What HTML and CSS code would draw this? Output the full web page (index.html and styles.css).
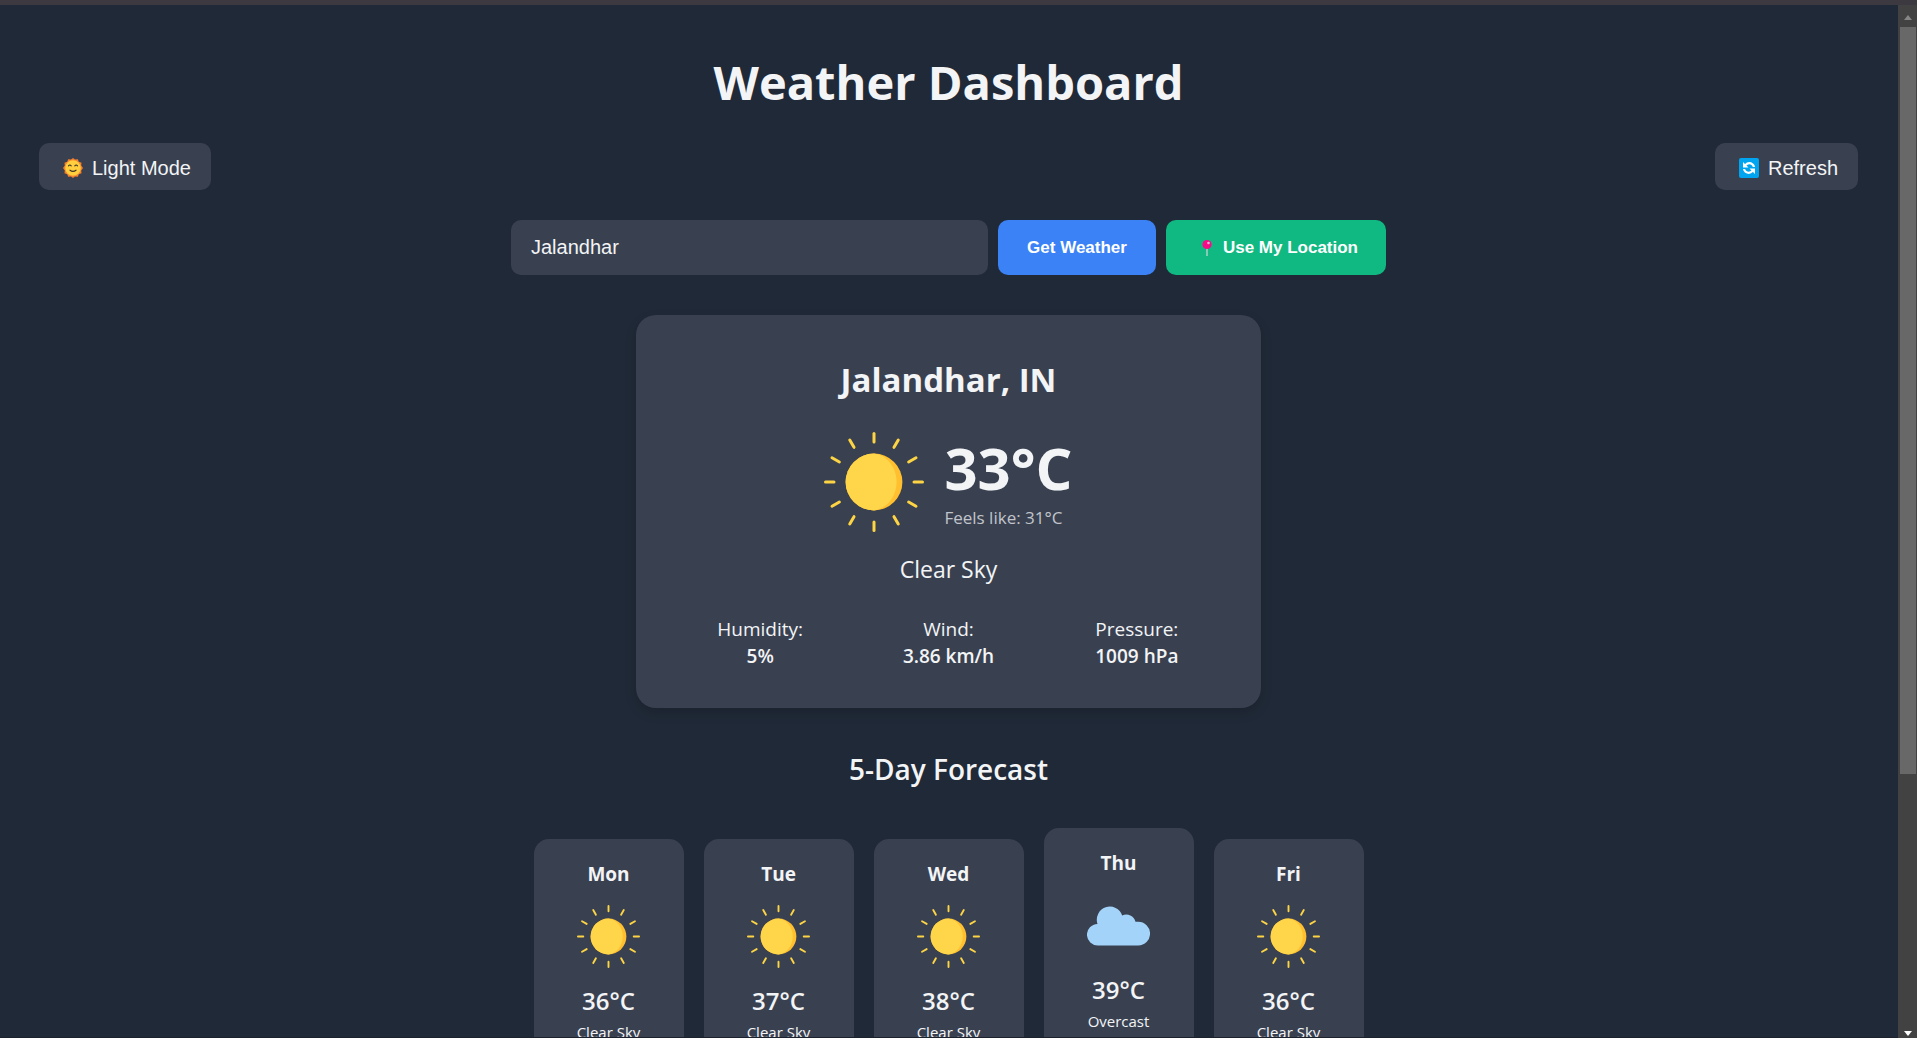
FILE: index.html
```html
<!DOCTYPE html>
<html lang="en">
<head>
<meta charset="utf-8">
<meta name="viewport" content="width=device-width, initial-scale=1">
<title>Weather Dashboard</title>
<link rel="stylesheet" href="styles.css">
</head>
<body>
<svg class="defs" aria-hidden="true">
  <symbol id="sun" viewBox="0 0 100 100">
    <circle cx="50" cy="50" r="28.400" fill="#ffbf2e"/>
    <path d="M50 21.600a28.400 28.400 0 1 0 0 56.800c13-1.500 22.600-14.300 22.600-28.400S63 23.100 50 21.600z" fill="#ffd54a"/>
    <g stroke="#fdd443" stroke-width="3" stroke-linecap="round">
      <path id="ray" d="M50 1.500v8.500"/>
      <use href="#ray" transform="rotate(30 50 50)"/>
      <use href="#ray" transform="rotate(60 50 50)"/>
      <use href="#ray" transform="rotate(90 50 50)"/>
      <use href="#ray" transform="rotate(120 50 50)"/>
      <use href="#ray" transform="rotate(150 50 50)"/>
      <use href="#ray" transform="rotate(180 50 50)"/>
      <use href="#ray" transform="rotate(210 50 50)"/>
      <use href="#ray" transform="rotate(240 50 50)"/>
      <use href="#ray" transform="rotate(270 50 50)"/>
      <use href="#ray" transform="rotate(300 50 50)"/>
      <use href="#ray" transform="rotate(330 50 50)"/>
    </g>
  </symbol>
  <symbol id="cloud" viewBox="0 0 63 63">
    <path d="M11 51.500a10.800 10.800 0 0 1-.5-21.600A12.800 12.800 0 0 1 35.200 21.500 9.500 9.500 0 0 1 48.500 27.800H51.200a11.850 11.850 0 0 1 0 23.700z" fill="#a3d3f8"/>
  </symbol>
</svg>
<div class="frame">
  <main class="page">
    <h1 class="title">Weather Dashboard</h1>
    <div class="toolbar">
      <button class="tool" type="button">
        <svg class="emoji" viewBox="0 0 20 20" aria-hidden="true">
          <path d="M10 0l2 1.600 2.800-.4 1 2.500 2.700 1.100-.3 2.800L20 10l-1.800 2.400.3 2.800-2.700 1.100-1 2.500-2.800-.4L10 20l-2-1.600-2.800.4-1-2.500-2.700-1.100.3-2.800L0 10l1.800-2.400-.3-2.800 2.700-1.100 1-2.500L8 1.600z" fill="#f8812c"/>
          <circle cx="10" cy="10" r="7.800" fill="#ffcf3d"/>
          <path d="M5.500 7.800q1.300-1.700 2.700 0M11.800 7.800q1.300-1.700 2.700 0M7 12.200q3 2.300 6 0" fill="none" stroke="#3d3529" stroke-width="1.100" stroke-linecap="round"/>
        </svg>
        <span>Light Mode</span>
      </button>
      <button class="tool" type="button">
        <svg class="emoji" viewBox="0 0 20 20" aria-hidden="true">
          <rect width="20" height="20" rx="2" fill="#00a4ef"/>
          <path d="M6.200 7.200Q9.800 3.500 13.400 6.300Q14.800 7.500 14.900 9M13.800 12.800Q10.200 16.500 6.600 13.700Q5.200 12.500 5.100 11" fill="none" stroke="#fff" stroke-width="2.200"/>
          <path d="M4 4v5.500h5.500zM16 16v-5.500h-5.500z" fill="#fff"/>
        </svg>
        <span>Refresh</span>
      </button>
    </div>
    <form class="search">
      <input class="city-input" type="text" value="Jalandhar" aria-label="City">
      <button class="action" type="button">Get Weather</button>
      <button class="action locate" type="button">
        <svg class="pin" viewBox="0 0 17 18" aria-hidden="true">
          <path d="M8.500 8v9" stroke="#b9d3cb" stroke-width="1.400"/>
          <circle cx="8.500" cy="5.500" r="4.600" fill="#f90b87"/>
          <circle cx="10" cy="4" r="1.300" fill="#ffb3dc"/>
        </svg>
        <span>Use My Location</span>
      </button>
    </form>
    <section class="current">
      <h2 class="city">Jalandhar, IN</h2>
      <div class="now">
        <svg class="now-icon" role="img" aria-label="Sun"><use href="#sun"/></svg>
        <div>
          <div class="temp">33°C</div>
          <div class="feels">Feels like: 31°C</div>
        </div>
      </div>
      <p class="sky">Clear Sky</p>
      <dl class="stats">
        <div><dt>Humidity:</dt><dd>5%</dd></div>
        <div><dt>Wind:</dt><dd>3.86 km/h</dd></div>
        <div><dt>Pressure:</dt><dd>1009 hPa</dd></div>
      </dl>
    </section>
    <h2 class="subtitle">5-Day Forecast</h2>
    <div class="forecast">
      <article class="day">
        <h3 class="day-name">Mon</h3>
        <svg class="day-icon" aria-hidden="true"><use href="#sun"/></svg>
        <div class="day-temp">36°C</div>
        <div class="day-sky">Clear Sky</div>
      </article>
      <article class="day">
        <h3 class="day-name">Tue</h3>
        <svg class="day-icon" aria-hidden="true"><use href="#sun"/></svg>
        <div class="day-temp">37°C</div>
        <div class="day-sky">Clear Sky</div>
      </article>
      <article class="day">
        <h3 class="day-name">Wed</h3>
        <svg class="day-icon" aria-hidden="true"><use href="#sun"/></svg>
        <div class="day-temp">38°C</div>
        <div class="day-sky">Clear Sky</div>
      </article>
      <article class="day">
        <h3 class="day-name">Thu</h3>
        <svg class="day-icon" aria-hidden="true"><use href="#cloud"/></svg>
        <div class="day-temp">39°C</div>
        <div class="day-sky">Overcast Clouds</div>
      </article>
      <article class="day">
        <h3 class="day-name">Fri</h3>
        <svg class="day-icon" aria-hidden="true"><use href="#sun"/></svg>
        <div class="day-temp">36°C</div>
        <div class="day-sky">Clear Sky</div>
      </article>
    </div>
  </main>
  <div class="scrollbar" aria-hidden="true">
    <svg class="arrow" viewBox="0 0 19 22"><path d="M6 15l4-5 4 5z" fill="#868686"/></svg>
    <div class="thumb"></div>
    <div class="rest"></div>
    <svg class="arrow" viewBox="0 0 19 22"><path d="M6 15h8l-4 5z" fill="#fff"/></svg>
  </div>
</div>
</body>
</html>
```

FILE: styles.css
```css
* {
  box-sizing: border-box;
  margin: 0;
}

body {
  height: 100vh;
  overflow: hidden;
  border-top: 5px solid #3c3a40;
  background: #202937;
  color: #f3f4f6;
  font-family: "Open Sans", "Noto Sans", sans-serif;
}

.defs {
  position: absolute;
  width: 0;
  height: 0;
}

.frame {
  display: grid;
  grid-template-columns: 1fr 19px;
  height: 100%;
}

.page {
  min-height: 0;
  overflow: hidden;
  padding: 45px 40px 0 39px;
  border-bottom: 1px solid #1b222d;
  text-align: center;
}

.title {
  font-size: 47px;
  line-height: 64px;
  font-weight: 700;
}

.toolbar {
  display: flex;
  justify-content: space-between;
  margin-top: 29px;
}

button,
input {
  border: 0;
  border-radius: 10px;
  color: inherit;
  font-family: "Liberation Sans", Arial, sans-serif;
}

.tool {
  display: flex;
  align-items: center;
  gap: 9px;
  height: 47px;
  padding: 3px 20px 0 24px;
  background: #394151;
  font-size: 20px;
}

.emoji {
  width: 20px;
  height: 20px;
}

.search {
  display: flex;
  gap: 10px;
  max-width: 875px;
  height: 55px;
  margin: 30px auto 0;
}

.city-input {
  flex: 1;
  min-width: 0;
  padding: 0 20px;
  background: #394151;
  font-size: 20px;
}

.action {
  padding: 0 29px;
  background: #3b82f6;
  color: #fff;
  font-size: 17px;
  font-weight: 700;
}

.locate {
  display: flex;
  align-items: center;
  gap: 6px;
  padding: 0 28px 0 31px;
  background: #10b982;
}

.pin {
  width: 20px;
  height: 18px;
}

.current {
  max-width: 625px;
  margin: 40px auto 0;
  padding: 42px 30px 38px;
  border-radius: 20px;
  background: #394151;
  box-shadow: 0 5px 12px rgba(0, 0, 0, 0.15);
}

.city {
  font-size: 33px;
  line-height: 46px;
}

.now {
  display: flex;
  justify-content: center;
  gap: 20px;
  margin-top: 29px;
  text-align: left;
}

.now-icon {
  width: 100px;
  height: 100px;
}

.temp {
  font-size: 58px;
  line-height: 72px;
  font-weight: 700;
}

.feels {
  color: #c1c4ca;
  font-size: 17px;
  line-height: 28px;
}

.sky {
  margin-top: 20px;
  font-size: 23px;
  line-height: 34px;
}

.stats {
  display: grid;
  grid-template-columns: repeat(3, 1fr);
  margin-top: 30px;
  font-size: 19px;
  line-height: 27px;
}

.stats dd {
  margin: 0;
  font-weight: 600;
}

.subtitle {
  margin-top: 41px;
  font-size: 28px;
  line-height: 40px;
  font-weight: 600;
}

.forecast {
  display: flex;
  align-items: center;
  justify-content: center;
  gap: 20px;
  margin-top: 39px;
}

.day {
  width: 150px;
  padding: 21px 20px;
  border-radius: 15px;
  background: #394151;
}

.day-name {
  font-size: 19px;
  line-height: 28px;
}

.day-icon {
  display: block;
  width: 63px;
  height: 63px;
  margin: 17px auto 16px;
}

.day-temp {
  font-size: 24px;
  line-height: 34px;
  font-weight: 600;
}

.day-sky {
  margin-top: 3px;
  font-size: 15px;
  line-height: 22px;
}

.scrollbar {
  display: flex;
  flex-direction: column;
  background: #424242;
}

.arrow {
  width: 19px;
  height: 22px;
}

.thumb {
  flex: 747;
  margin: 0 1px 0 2px;
  background: #686868;
}

.rest {
  flex: 242;
}
```
